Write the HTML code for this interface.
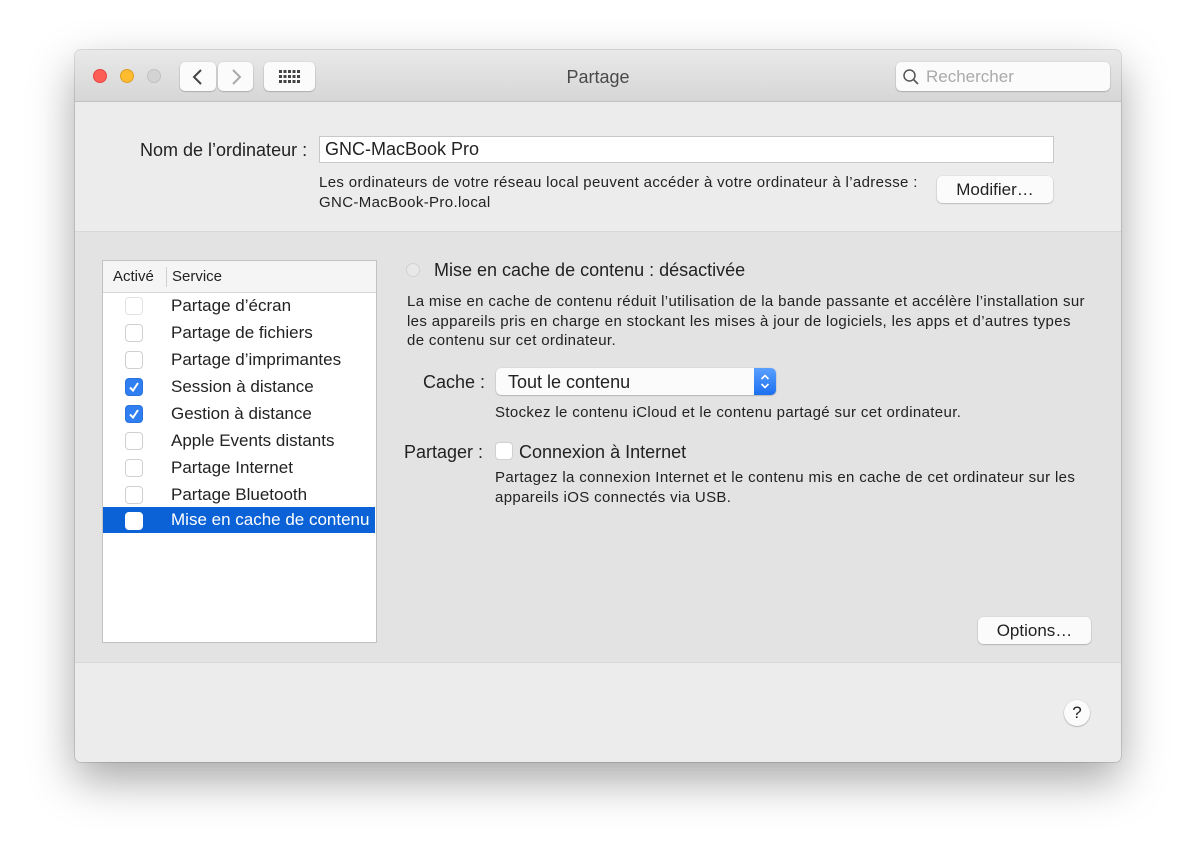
<!DOCTYPE html>
<html><head><meta charset="utf-8"><style>
*{box-sizing:border-box;margin:0;padding:0}
body{width:1196px;height:862px;background:#fff;position:relative;font-family:"Liberation Sans",sans-serif;color:#222;overflow:hidden}
.win{position:absolute;left:75px;top:50px;width:1046px;height:712px;border-radius:6px;background:#ececec;box-shadow:0 18px 45px rgba(0,0,0,.35),0 0 0 1px rgba(0,0,0,.12);overflow:hidden}
.title{position:absolute;left:0;top:0;width:100%;height:52px;background:linear-gradient(#e9e9e9,#d6d6d6);border-bottom:1px solid #c3c3c3}
.dot{position:absolute;top:19px;width:14px;height:14px;border-radius:50%}
.btn{position:absolute;background:#fbfbfb;border-radius:5px;box-shadow:0 0.5px 1.5px rgba(0,0,0,.35)}
.abs{position:absolute}
.t{position:absolute;white-space:nowrap}
.s{font-size:15px;letter-spacing:.35px;line-height:19.5px}
.cb{position:absolute;width:18px;height:18px;border-radius:4px;background:#fff;border:1px solid #d0d0d0}
.cb.on{background:#2f7ff2;border-color:#2a72dc}
.row{position:absolute;left:0;width:272px;height:27px}
.row .t{left:68px;top:3px;font-size:17px}
.row .cb{left:22px;top:4px}
</style></head><body>
<div class="win">
 <div class="title">
  <div class="dot" style="left:18px;background:#fd5d57;border:1px solid #e2463f"></div>
  <div class="dot" style="left:45px;background:#fdbb2f;border:1px solid #dea026"></div>
  <div class="dot" style="left:72px;background:#d3d3d3;border:1px solid #c2c2c2"></div>
  <div class="btn" style="left:105px;top:12px;width:36px;height:29px"></div>
  <div class="btn" style="left:143px;top:12px;width:35px;height:29px"></div>
  <svg class="abs" style="left:116px;top:17px" width="14" height="20"><path d="M10 3 L3 10 L10 17" fill="none" stroke="#444" stroke-width="2"/></svg>
  <svg class="abs" style="left:154px;top:17px" width="14" height="20"><path d="M4 3 L11 10 L4 17" fill="none" stroke="#aaa" stroke-width="2"/></svg>
  <div class="btn" style="left:189px;top:12px;width:51px;height:29px"></div>
  <svg class="abs" style="left:204px;top:20px" width="21" height="14"><g fill="#444">
   <rect x="0" y="0" width="3" height="3"/><rect x="4.5" y="0" width="3" height="3"/><rect x="9" y="0" width="3" height="3"/><rect x="13.5" y="0" width="3" height="3"/><rect x="18" y="0" width="3" height="3"/>
   <rect x="0" y="5" width="3" height="3"/><rect x="4.5" y="5" width="3" height="3"/><rect x="9" y="5" width="3" height="3"/><rect x="13.5" y="5" width="3" height="3"/><rect x="18" y="5" width="3" height="3"/>
   <rect x="0" y="10" width="3" height="3"/><rect x="4.5" y="10" width="3" height="3"/><rect x="9" y="10" width="3" height="3"/><rect x="13.5" y="10" width="3" height="3"/><rect x="18" y="10" width="3" height="3"/></g></svg>
  <div class="t" style="left:0;width:1046px;text-align:center;top:17px;font-size:18px;color:#4a4a4a">Partage</div>
  <div class="btn" style="left:821px;top:12px;width:214px;height:29px"></div>
  <svg class="abs" style="left:827px;top:18px" width="18" height="18"><circle cx="7.5" cy="7.5" r="5.5" fill="none" stroke="#555" stroke-width="1.5"/><path d="M11.5 11.5 L16 16" stroke="#555" stroke-width="1.6"/></svg>
  <div class="t" style="left:851px;top:17px;font-size:17px;color:#aaa">Rechercher</div>
 </div>
 <div class="t" style="left:65px;top:90px;font-size:18px">Nom de l’ordinateur :</div>
 <div class="abs" style="left:244px;top:86px;width:735px;height:27px;background:#fff;border:1px solid #c8c8c8"></div>
 <div class="t" style="left:250px;top:89px;font-size:18px">GNC-MacBook Pro</div>
 <div class="t s" style="left:244px;top:123px">Les ordinateurs de votre réseau local peuvent accéder à votre ordinateur à l’adresse :<br>GNC-MacBook-Pro.local</div>
 <div class="btn" style="left:862px;top:126px;width:116px;height:27px"></div>
 <div class="t" style="left:862px;top:130px;width:116px;text-align:center;font-size:17px">Modifier…</div>
 <div class="abs" style="left:0;top:181px;width:1046px;height:432px;background:#e3e3e3;border-top:1px solid #d8d8d8;border-bottom:1px solid #d8d8d8"></div>
 <div class="abs" style="left:27px;top:210px;width:275px;height:383px;background:#fff;border:1px solid #c2c2c2">
  <div class="abs" style="left:0;top:0;width:273px;height:32px;background:#f5f5f5;border-bottom:1px solid #d6d6d6"></div>
  <div class="abs" style="left:63px;top:6px;width:1px;height:20px;background:#d0d0d0"></div>
  <div class="t" style="left:10px;top:7px;font-size:15px">Activé</div>
  <div class="t" style="left:69px;top:7px;font-size:15px">Service</div>
  <div class="row" style="top:32px"><div class="cb" style="border-color:#e2e2e2"></div><div class="t">Partage d’écran</div></div>
  <div class="row" style="top:59px"><div class="cb"></div><div class="t">Partage de fichiers</div></div>
  <div class="row" style="top:86px"><div class="cb"></div><div class="t">Partage d’imprimantes</div></div>
  <div class="row" style="top:113px"><div class="cb on"><svg width="16" height="16"><path d="M4 8.5 L7 11.5 L12 4" fill="none" stroke="#fff" stroke-width="2"/></svg></div><div class="t">Session à distance</div></div>
  <div class="row" style="top:140px"><div class="cb on"><svg width="16" height="16"><path d="M4 8.5 L7 11.5 L12 4" fill="none" stroke="#fff" stroke-width="2"/></svg></div><div class="t">Gestion à distance</div></div>
  <div class="row" style="top:167px"><div class="cb"></div><div class="t">Apple Events distants</div></div>
  <div class="row" style="top:194px"><div class="cb"></div><div class="t">Partage Internet</div></div>
  <div class="row" style="top:221px"><div class="cb"></div><div class="t">Partage Bluetooth</div></div>
  <div class="row" style="top:246px;background:#0a62d6;height:26px"><div class="cb" style="border-color:#fff;top:5px"></div><div class="t" style="color:#fff;top:3px">Mise en cache de contenu</div></div>
 </div>
 <div class="abs" style="left:331px;top:213px;width:14px;height:14px;border-radius:50%;border:1px solid #d2d2d2;background:#e8e8e8"></div>
 <div class="t" style="left:359px;top:210px;font-size:18px">Mise en cache de contenu : désactivée</div>
 <div class="t s" style="left:332px;top:242px">La mise en cache de contenu réduit l’utilisation de la bande passante et accélère l’installation sur<br>les appareils pris en charge en stockant les mises à jour de logiciels, les apps et d’autres types<br>de contenu sur cet ordinateur.</div>
 <div class="t" style="left:348px;top:322px;font-size:18px">Cache :</div>
 <div class="btn" style="left:421px;top:318px;width:280px;height:27px"></div>
 <div class="abs" style="left:679px;top:318px;width:22px;height:27px;border-radius:0 5px 5px 0;background:linear-gradient(#5aa0ff,#1b6ff0)"></div>
 <svg class="abs" style="left:683px;top:321px" width="14" height="21"><path d="M3.5 8 L7 4.5 L10.5 8 M3.5 13 L7 16.5 L10.5 13" fill="none" stroke="#fff" stroke-width="1.6"/></svg>
 <div class="t" style="left:433px;top:322px;font-size:18px">Tout le contenu</div>
 <div class="t s" style="left:420px;top:353px">Stockez le contenu iCloud et le contenu partagé sur cet ordinateur.</div>
 <div class="t" style="left:329px;top:392px;font-size:18px">Partager :</div>
 <div class="cb" style="left:420px;top:392px"></div>
 <div class="t" style="left:444px;top:392px;font-size:18px">Connexion à Internet</div>
 <div class="t s" style="left:420px;top:418px">Partagez la connexion Internet et le contenu mis en cache de cet ordinateur sur les<br>appareils iOS connectés via USB.</div>
 <div class="btn" style="left:903px;top:567px;width:113px;height:27px"></div>
 <div class="t" style="left:903px;top:571px;width:113px;text-align:center;font-size:17px">Options…</div>
 <div class="abs" style="left:989px;top:650px;width:26px;height:26px;border-radius:50%;background:#fbfbfb;box-shadow:0 0.5px 1.5px rgba(0,0,0,.4)"></div>
 <div class="t" style="left:989px;top:653px;width:26px;text-align:center;font-size:17px">?</div>
</div>
</body></html>
